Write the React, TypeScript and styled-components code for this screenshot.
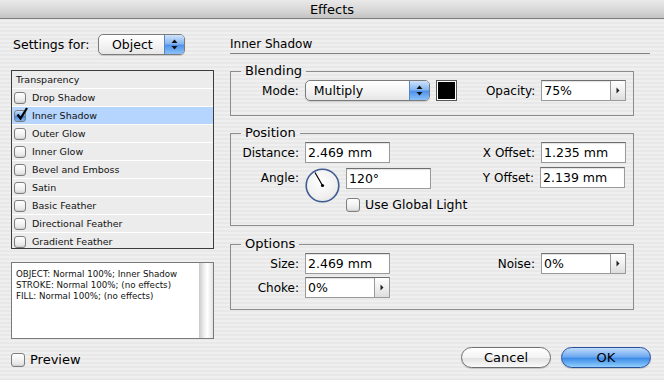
import React from "react";
import styled, { createGlobalStyle, css } from "styled-components";

const font = `"DejaVu Sans", "Liberation Sans", sans-serif`;

const GlobalStyle = createGlobalStyle`
	html, body {
		margin: 0;
		padding: 0;
	}
	body {
		font-family: ${font};
		color: #000;
		background: #ececec;
	}
`;

const Window = styled.div`
	width: 664px;
	height: 380px;
	overflow: hidden;
	background: repeating-linear-gradient(
		180deg,
		#efefef 0,
		#efefef 2px,
		#e8e8e8 2px,
		#e8e8e8 4px
	);
`;

const TitleBar = styled.div`
	height: 18px;
	display: flex;
	align-items: center;
	justify-content: center;
	font-size: 13px;
	background: linear-gradient(180deg, #e9e9e9 0%, #d6d6d6 60%, #c3c3c3 100%);
	border-bottom: 1px solid #7c7c7c;
`;

const Body = styled.div`
	display: grid;
	grid-template-columns: 203px 421px;
	column-gap: 16px;
	padding: 15px 0 0 11px;
`;

const Column = styled.div`
	display: flex;
	flex-direction: column;
`;

const Row = styled.div<{ $gap?: number; $mt?: number }>`
	display: flex;
	align-items: center;
	gap: ${(p) => p.$gap ?? 6}px;
	margin-top: ${(p) => p.$mt ?? 0}px;
`;

const Label = styled.span<{ $w?: number }>`
	font-size: 12px;
	white-space: nowrap;
	${(p) =>
		p.$w &&
		css`
			width: ${p.$w}px;
			text-align: right;
		`}
`;

const SettingsLabel = styled.span`
	width: 81px;
	box-sizing: border-box;
	padding-left: 2px;
	font-size: 12.5px;
	white-space: nowrap;
`;

/* aqua popup */
const Popup = styled.div<{ $w: number }>`
	width: ${(p) => p.$w}px;
	height: 21px;
	box-sizing: border-box;
	display: flex;
	border: 1px solid #7b7b7b;
	border-radius: 5px;
	overflow: hidden;
	background: linear-gradient(180deg, #ffffff 0%, #f4f4f4 50%, #e6e6e6 100%);
	box-shadow: 0 1px 1px rgba(0, 0, 0, 0.15);
`;

const PopupText = styled.span<{ $pl: number }>`
	flex: 1;
	font-size: 12.5px;
	line-height: 19px;
	padding-left: ${(p) => p.$pl}px;
`;

const PopupArrows = styled.span`
	width: 19px;
	display: flex;
	align-items: center;
	justify-content: center;
	border-left: 1px solid #5a86c8;
	background: linear-gradient(180deg, #cfe3fb 0%, #87b6f0 45%, #4f93ea 55%, #8cc2fa 100%);
`;

const ArrowsIcon = () => (
	<svg width="7" height="11" viewBox="0 0 7 11">
		<path d="M3.5 0.5 L6.5 4 L0.5 4 Z" fill="#111" />
		<path d="M3.5 10.5 L6.5 7 L0.5 7 Z" fill="#111" />
	</svg>
);

/* list of effects */
const EffectList = styled.div`
	margin-top: 15px;
	height: 179px;
	box-sizing: border-box;
	border: 1px solid #3c3c3c;
	background: #fff;
	overflow: hidden;
`;

const ListRow = styled.div<{ $selected?: boolean; $header?: boolean }>`
	height: 18px;
	box-sizing: border-box;
	border-bottom: 1px solid #fff;
	display: flex;
	align-items: center;
	gap: 6px;
	padding-left: ${(p) => (p.$header ? 4 : 2)}px;
	font-size: 9.5px;
	color: #111;
	background: ${(p) => (p.$selected ? "#b5d5ff" : "#ececec")};
`;

const Box = styled.span<{ $size: number; $checked?: boolean }>`
	position: relative;
	flex: none;
	width: ${(p) => p.$size}px;
	height: ${(p) => p.$size}px;
	box-sizing: border-box;
	border: 1px solid #7e7e7e;
	border-radius: 3px;
	background: ${(p) =>
		p.$checked
			? "linear-gradient(180deg, #c8e0fb 0%, #6aa6ee 50%, #3d86e6 55%, #8ec4fb 100%)"
			: "linear-gradient(180deg, #ffffff 0%, #f2f2f2 50%, #e0e0e0 100%)"};
	box-shadow: inset 0 -1px 1px rgba(0, 0, 0, 0.08);
`;

const CheckMark = styled.svg`
	position: absolute;
	left: 1px;
	top: -4px;
`;

const Checkbox = ({ size, checked }: { size: number; checked?: boolean }) => (
	<Box $size={size} $checked={checked}>
		{checked && (
			<CheckMark width="13" height="14" viewBox="0 0 13 14">
				<path d="M1.5 7.5 L4.5 11.5 L11 1" stroke="#000" strokeWidth="2.2" fill="none" />
			</CheckMark>
		)}
	</Box>
);

const DescBox = styled.div`
	margin-top: 13px;
	height: 77px;
	box-sizing: border-box;
	border: 1px solid #7a7a7a;
	background: #fff;
	display: flex;
`;

const DescText = styled.div`
	flex: 1;
	padding: 6px 0 0 4px;
	font-size: 8.7px;
	line-height: 11px;
	color: #111;
`;

const ScrollTrack = styled.div`
	width: 14px;
	background: linear-gradient(90deg, #c9c9c9 0%, #eeeeee 35%, #ffffff 60%, #e2e2e2 100%);
`;

const PreviewLabel = styled.span`
	font-size: 13px;
`;

/* right side */
const Heading = styled.div`
	height: 19px;
	display: flex;
	align-items: center;
	font-size: 12px;
	border-bottom: 1px solid #7f7f7f;
	margin-right: 1px;
`;

const Group = styled.fieldset<{ $mt: number; $pb: number }>`
	margin: ${(p) => p.$mt}px 0 0 0;
	width: 404px;
	box-sizing: border-box;
	min-inline-size: 0;
	padding: 1px 7px ${(p) => p.$pb}px 0;
	border: 1px solid #8c8c8c;
`;

const Legend = styled.legend`
	margin-left: 10px;
	padding: 0 4px;
	font-size: 13px;
	line-height: 16px;
`;

const Split = styled.div`
	display: flex;
	justify-content: space-between;
	align-items: flex-start;
`;

const Stack = styled.div<{ $gap: number }>`
	display: flex;
	flex-direction: column;
	gap: ${(p) => p.$gap}px;
`;

const Field = styled.div<{ $w: number }>`
	width: ${(p) => p.$w}px;
	height: 21px;
	box-sizing: border-box;
	display: flex;
	background: #fff;
	border: 1px solid #9a9a9a;
	border-top-color: #6e6e6e;
	box-shadow: inset 0 1px 1px rgba(0, 0, 0, 0.12);
`;

const FieldText = styled.span`
	flex: 1;
	font-size: 12.5px;
	line-height: 19px;
	padding-left: 2px;
`;

const StepButton = styled.span`
	width: 14px;
	display: flex;
	align-items: center;
	justify-content: center;
	border-left: 1px solid #9a9a9a;
	background: linear-gradient(180deg, #ffffff 0%, #f0f0f0 50%, #dddddd 100%);
`;

const TextField = ({ w, value, stepper }: { w: number; value: string; stepper?: boolean }) => (
	<Field $w={w}>
		<FieldText>{value}</FieldText>
		{stepper && (
			<StepButton>
				<svg width="4" height="7" viewBox="0 0 4 7">
					<path d="M0.5 0.5 L3.5 3.5 L0.5 6.5 Z" fill="#222" />
				</svg>
			</StepButton>
		)}
	</Field>
);

const Swatch = styled.span`
	width: 21px;
	height: 21px;
	box-sizing: border-box;
	border: 1px solid #555;
	background: #000;
	box-shadow: inset 0 0 0 1px #fff;
`;

const Dial = styled.svg`
	flex: none;
`;

const AngleDial = ({ angle }: { angle: number }) => {
	const r = 15;
	const rad = (angle * Math.PI) / 180;
	const x = 17.5 + Math.cos(rad) * r;
	const y = 17.5 - Math.sin(rad) * r;
	return (
		<Dial width="35" height="35" viewBox="0 0 35 35">
			<defs>
				<radialGradient id="dialFill" cx="0.45" cy="0.4" r="0.7">
					<stop offset="0" stopColor="#ffffff" />
					<stop offset="0.7" stopColor="#efefef" />
					<stop offset="1" stopColor="#d8d8d8" />
				</radialGradient>
			</defs>
			<circle cx="17.5" cy="17.5" r="16.3" fill="url(#dialFill)" stroke="#3e5b92" strokeWidth="1.6" />
			<line x1="17.5" y1="17.5" x2={x} y2={y} stroke="#000" strokeWidth="1.2" />
			<circle cx="17.5" cy="17.5" r="1.6" fill="#000" />
		</Dial>
	);
};

const Buttons = styled.div`
	margin-top: 37px;
	display: flex;
	justify-content: flex-end;
	gap: 10px;
`;

const PillButton = styled.button<{ $primary?: boolean }>`
	width: 90px;
	height: 21px;
	padding: 0;
	font-family: ${font};
	font-size: 13px;
	color: #000;
	border-radius: 11px;
	border: 1px solid ${(p) => (p.$primary ? "#2a4f9c" : "#6f6f6f")};
	background: ${(p) =>
		p.$primary
			? "linear-gradient(180deg, #bfdcfb 0%, #6faaf0 45%, #3f8ce8 55%, #8fd0fd 100%)"
			: "linear-gradient(180deg, #ffffff 0%, #f3f3f3 50%, #e2e2e2 55%, #fafafa 100%)"};
	box-shadow: 0 1px 1px rgba(0, 0, 0, 0.18);
`;

const effects = [
	"Drop Shadow",
	"Inner Shadow",
	"Outer Glow",
	"Inner Glow",
	"Bevel and Emboss",
	"Satin",
	"Basic Feather",
	"Directional Feather",
	"Gradient Feather",
];

export default function App() {
	return (
		<>
			<GlobalStyle />
			<Window>
				<TitleBar>Effects</TitleBar>
				<Body>
					<Column>
						<Row>
							<SettingsLabel>Settings for:</SettingsLabel>
							<Popup $w={87}>
								<PopupText $pl={13}>Object</PopupText>
								<PopupArrows>
									<ArrowsIcon />
								</PopupArrows>
							</Popup>
						</Row>
						<EffectList>
							<ListRow $header>Transparency</ListRow>
							{effects.map((name) => (
								<ListRow key={name} $selected={name === "Inner Shadow"}>
									<Checkbox size={12} checked={name === "Inner Shadow"} />
									{name}
								</ListRow>
							))}
						</EffectList>
						<DescBox>
							<DescText>
								OBJECT: Normal 100%; Inner Shadow
								<br />
								STROKE: Normal 100%; (no effects)
								<br />
								FILL: Normal 100%; (no effects)
							</DescText>
							<ScrollTrack />
						</DescBox>
						<Row $gap={5} $mt={13}>
							<Checkbox size={14} />
							<PreviewLabel>Preview</PreviewLabel>
						</Row>
					</Column>

					<Column>
						<Heading>Inner Shadow</Heading>

						<Group $mt={9} $pb={14}>
							<Legend>Blending</Legend>
							<Row>
								<Label $w={68}>Mode:</Label>
								<Popup $w={126}>
									<PopupText $pl={8}>Multiply</PopupText>
									<PopupArrows>
										<ArrowsIcon />
									</PopupArrows>
								</Popup>
								<Swatch />
								<Label $w={72}>Opacity:</Label>
								<TextField w={85} value="75%" stepper />
							</Row>
						</Group>

						<Group $mt={9} $pb={13}>
							<Legend>Position</Legend>
							<Split>
								<Stack $gap={5}>
									<Row>
										<Label $w={68}>Distance:</Label>
										<TextField w={85} value="2.469 mm" />
									</Row>
									<Row style={{ alignItems: "flex-start" }}>
										<Label $w={68} style={{ lineHeight: "21px" }}>
											Angle:
										</Label>
										<AngleDial angle={120} />
										<Stack $gap={8}>
											<TextField w={85} value="120°" />
											<Row $gap={5}>
												<Checkbox size={14} />
												<Label style={{ fontSize: 12.5 }}>Use Global Light</Label>
											</Row>
										</Stack>
									</Row>
								</Stack>
								<Stack $gap={4}>
									<Row>
										<Label>X Offset:</Label>
										<TextField w={85} value="1.235 mm" />
									</Row>
									<Row>
										<Label>Y Offset:</Label>
										<TextField w={85} value="2.139 mm" />
									</Row>
								</Stack>
							</Split>
						</Group>

						<Group $mt={10} $pb={11}>
							<Legend>Options</Legend>
							<Split>
								<Stack $gap={3}>
									<Row>
										<Label $w={68}>Size:</Label>
										<TextField w={85} value="2.469 mm" />
									</Row>
									<Row>
										<Label $w={68}>Choke:</Label>
										<TextField w={85} value="0%" stepper />
									</Row>
								</Stack>
								<Row>
									<Label>Noise:</Label>
									<TextField w={85} value="0%" stepper />
								</Row>
							</Split>
						</Group>

						<Buttons>
							<PillButton>Cancel</PillButton>
							<PillButton $primary>OK</PillButton>
						</Buttons>
					</Column>
				</Body>
			</Window>
		</>
	);
}
